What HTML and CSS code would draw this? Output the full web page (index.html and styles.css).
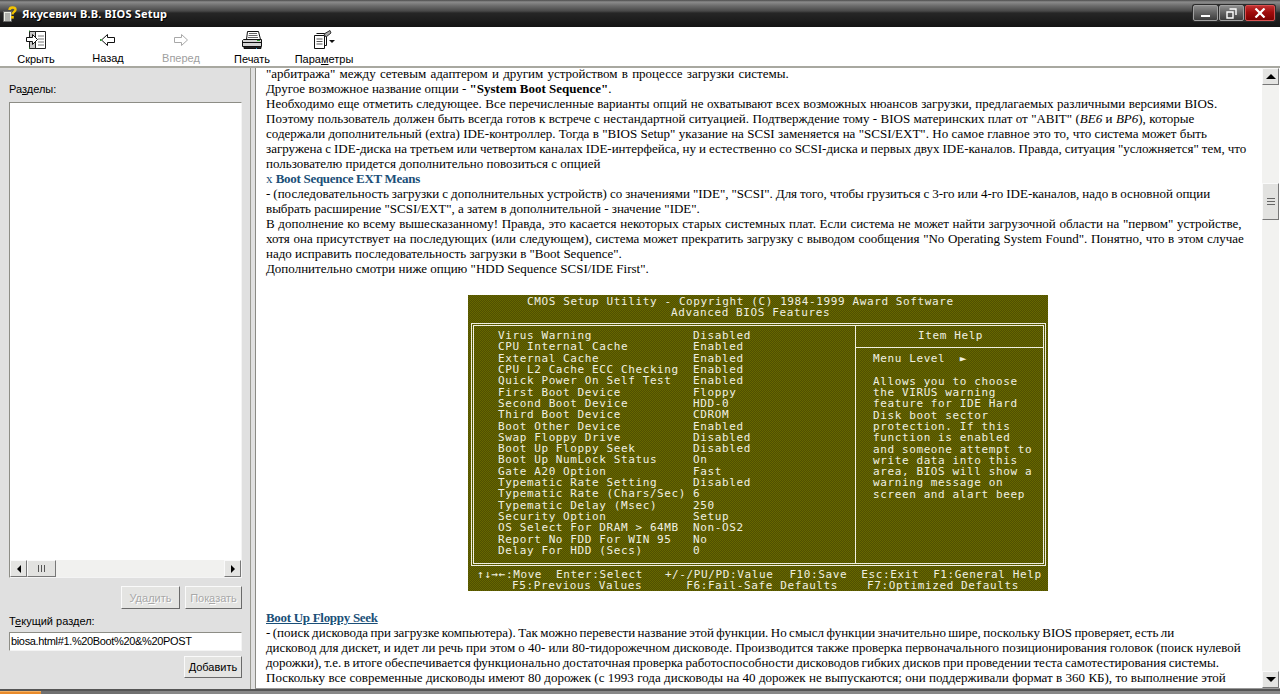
FILE: index.html
```html
<!DOCTYPE html>
<html lang="ru">
<head>
<meta charset="utf-8">
<title>Якусевич В.В. BIOS Setup</title>
<link rel="stylesheet" href="styles.css">
</head>
<body>
<div class="window">
  <header class="titlebar">
    <svg class="app-icon" width="15" height="16" viewBox="0 0 15 16"><path d="M1.500 5.500h8v10h-8z" fill="#eceee6" stroke="#666"/><path d="M3 8h5M3 10h5M3 12h5M3 14h5" stroke="#777"/><path d="M7.500 4C7.500 1 13.500 .5 13.500 3.500c0 2.500-3 2.200-3 5" fill="none" stroke="#f2c200" stroke-width="2.400"/><path d="M9 10h2.800v2.600H9z" fill="#f2c200"/></svg>
    <span class="app-title">Якусевич В.В. BIOS Setup</span>
    <div class="win-buttons">
      <span class="win-btn"><i class="min-glyph"></i></span>
      <span class="win-btn"><svg width="11" height="11" viewBox="0 0 11 11"><path d="M3.500 1h6.500v6M1 4h6v6H1z" fill="none" stroke="#fff" stroke-width="1.400"/></svg></span>
      <span class="win-btn close"><svg width="12" height="10" viewBox="0 0 12 10"><path d="M1.500 0.500l9 9M10.500 0.500l-9 9" stroke="#fff" stroke-width="2.200"/></svg></span>
    </div>
  </header>

  <nav class="toolbar">
    <div class="tool t-hide">
      <svg width="22" height="20" viewBox="0 0 22 20"><path d="M4.500 1.500h16v17h-16z" fill="#fff" stroke="#222"/><path d="M4.500 1.500h6v17h-6z" fill="#c8c8c8" stroke="#222"/><path d="M13 6h6M13 9h6M13 12h6M13 15h6" stroke="#777"/><path d="M1.500 7.500h6V4.500l5 5-5 5v-3h-6z" fill="#fff" stroke="#111"/><path d="M4 1h1M4 18h1" stroke="#2a9a2a"/></svg>
      <span>Скрыть</span>
    </div>
    <div class="tool t-back">
      <svg width="16" height="14" viewBox="0 0 16 14"><path d="M1.500 7L7.500 1.500v3h7v5h-7v3z" fill="#fff" stroke="#111"/><path d="M0 7h1.500" stroke="#2a9a2a" stroke-width="2"/></svg>
      <span>Назад</span>
    </div>
    <div class="tool t-forward disabled">
      <svg width="16" height="14" viewBox="0 0 16 14"><path d="M14.500 7L8.500 1.500v3h-7v5h7v3z" fill="#fff" stroke="#a8a8a8"/></svg>
      <span>Вперед</span>
    </div>
    <div class="tool t-print">
      <svg width="21" height="20" viewBox="0 0 21 20"><path d="M5.500 1.500h11l2 8h-14z" fill="#fff" stroke="#111"/><path d="M7 3.500h8M6.500 5.500h9M6 7.500h10" stroke="#666"/><path d="M1.500 9.500h18v7h-19v-6z" fill="#d4d4d4" stroke="#111"/><path d="M1 12.500h18.500" stroke="#111"/><path d="M2 16.500h17v2H2z" fill="#222" stroke="#111"/><path d="M15 10.500h3" stroke="#2a9a2a"/><path d="M14 18.500h1" stroke="#29a8d8"/></svg>
      <span>Печать</span>
    </div>
    <div class="tool t-options">
      <svg width="22" height="20" viewBox="0 0 22 20"><path d="M1.500 5.500h10v13h-10z" fill="#fff" stroke="#111"/><path d="M3.500 3.500h10v12h-2M5.500 1.500" fill="none" stroke="#111"/><path d="M3.500 9h6M3.500 11.500h6M3.500 14h6" stroke="#555"/><path d="M11 4l6-3.500 1 2.500-5 4z" fill="#aaa" stroke="#333"/><path d="M16 10h6l-3 3z" fill="#111"/></svg>
      <span>Пара<u>м</u>етры</span>
    </div>
  </nav>

  <div class="workspace">
    <aside class="sidebar">
      <label class="side-label">Ра<u>з</u>делы:</label>
      <div class="listbox">
        <div class="listbox-body"></div>
        <div class="hscroll">
          <span class="sb-btn"><i class="arrow left"></i></span>
          <span class="hthumb"><i class="grip-v"></i></span>
          <span class="htrack"></span>
          <span class="sb-btn"><i class="arrow right"></i></span>
        </div>
      </div>
      <div class="btn-row">
        <span class="btn btn-off">Уда<u>л</u>ить</span>
        <span class="btn btn-off btn-show">Пок<u>а</u>зать</span>
      </div>
      <label class="side-label current">Т<u>е</u>кущий раздел:</label>
      <div class="textbox">biosa.html#1.%20Boot%20&amp;%20POST</div>
      <div class="btn-row add-row"><span class="btn btn-add"><u>Д</u>обавить</span></div>
    </aside>

    <div class="splitter"></div>

    <main class="doc-frame">
      <article class="doc">
        <p><span class="ws-p10">"арбитража" между сетевым адаптером и другим устройством в процессе загрузки системы.</span><br>
        Другое возможное название опции - <b>"System Boot Sequence"</b>.<br>
        <span class="ws-p2">Необходимо еще отметить следующее. Все перечисленные варианты опций не охватывают всех возможных нюансов загрузки, предлагаемых различными версиями BIOS.</span><br>
        <span class="ws-p1">Поэтому пользователь должен быть всегда готов к встрече с нестандартной ситуацией. Подтверждение тому - BIOS материнских плат от "ABIT" (<i>ВЕ6</i> и <i>ВР6</i>), которые</span><br>
        <span class="ws-p1">содержали дополнительный (extra) IDE-контроллер. Тогда в "BIOS Setup" указание на SCSI заменяется на "SCSI/EXT". Но самое главное это то, что система может быть</span><br>
        <span class="ws-n2">загружена с IDE-диска на третьем или четвертом каналах IDE-интерфейса, ну и естественно со SCSI-диска и первых двух IDE-каналов. Правда, ситуация "усложняется" тем, что</span><br>
        пользователю придется дополнительно повозиться с опцией<br>
        <span class="term">x <b>Boot Sequence EXT Means</b></span><br>
        <span class="ws-n2">- (последовательность загрузки с дополнительных устройств) со значениями "IDE", "SCSI". Для того, чтобы грузиться с 3-го или 4-го IDE-каналов, надо в основной опции</span><br>
        выбрать расширение "SCSI/EXT", а затем в дополнительной - значение "IDE".<br>
        <span class="ws-p4">В дополнение ко всему вышесказанному! Правда, это касается некоторых старых системных плат. Если система не может найти загрузочной области на "первом" устройстве,</span><br>
        <span class="ws-p4">хотя она присутствует на последующих (или следующем), система может прекратить загрузку с выводом сообщения "No Operating System Found". Понятно, что в этом случае</span><br>
        надо исправить последовательность загрузки в "Boot Sequence".<br>
        Дополнительно смотри ниже опцию "HDD Sequence SCSI/IDE First".</p>

        <figure class="bios">
          <div class="bios-head"><div class="head-1">CMOS Setup Utility - Copyright (C) 1984-1999 Award Software</div><div class="head-2">Advanced BIOS Features</div></div>
          <div class="bios-frame">
            <div class="bios-settings">
              <div class="bios-names">Virus Warning<br>CPU Internal Cache<br>External Cache<br>CPU L2 Cache ECC Checking<br>Quick Power On Self Test<br>First Boot Device<br>Second Boot Device<br>Third Boot Device<br>Boot Other Device<br>Swap Floppy Drive<br>Boot Up Floppy Seek<br>Boot Up NumLock Status<br>Gate A20 Option<br>Typematic Rate Setting<br>Typematic Rate (Chars/Sec)<br>Typematic Delay (Msec)<br>Security Option<br>OS Select For DRAM &gt; 64MB<br>Report No FDD For WIN 95<br>Delay For HDD (Secs)</div>
              <div class="bios-values">Disabled<br>Enabled<br>Enabled<br>Enabled<br>Enabled<br>Floppy<br>HDD-0<br>CDROM<br>Enabled<br>Disabled<br>Disabled<br>On<br>Fast<br>Disabled<br>6<br>250<br>Setup<br>Non-OS2<br>No<br>0</div>
            </div>
            <div class="bios-help">
              <div class="help-title">Item Help</div>
              <div class="help-body">Menu Level &nbsp;►<br><br>Allows you to choose<br>the VIRUS warning<br>feature for IDE Hard<br>Disk boot sector<br>protection. If this<br>function is enabled<br>and someone attempt to<br>write data into this<br>area, BIOS will show a<br>warning message on<br>screen and alart beep</div>
            </div>
          </div>
          <div class="bios-foot">
            <div class="foot-row r1"><span>↑↓→←:Move</span><span>Enter:Select</span><span>+/-/PU/PD:Value</span><span>F10:Save</span><span>Esc:Exit</span><span>F1:General Help</span></div>
            <div class="foot-row r2"><span>F5:Previous Values</span><span>F6:Fail-Safe Defaults</span><span>F7:Optimized Defaults</span></div>
          </div>
        </figure>

        <p><a class="section-link">Boot Up Floppy Seek</a><br>
        <span class="ws-n8">- (поиск дисковода при загрузке компьютера). Так можно перевести название этой функции. Но смысл функции значительно шире, поскольку BIOS проверяет, есть ли</span><br>
        <span class="ws-n1">дисковод для дискет, и идет ли речь при этом о 40- или 80-тидорожечном дисководе. Производится также проверка первоначального позиционирования головок (поиск нулевой</span><br>
        <span class="ws-n7">дорожки), т.е. в итоге обеспечивается функционально достаточная проверка работоспособности дисководов гибких дисков при проведении теста самотестирования системы.</span><br>
        <span class="ws-p1">Поскольку все современные дисководы имеют 80 дорожек (с 1993 года дисководы на 40 дорожек не выпускаются; они поддерживали формат в 360 КБ), то выполнение этой</span></p>
      </article>
      <div class="vscroll">
        <span class="sb-btn"><i class="arrow up"></i></span>
        <span class="vtrack vtrack-top"></span>
        <span class="vthumb"><i class="grip-h"></i></span>
        <span class="vtrack vtrack-bottom"></span>
        <span class="sb-btn"><i class="arrow down"></i></span>
      </div>
    </main>
  </div>

  <footer class="taskbar"><span class="start"></span><span class="task"></span></footer>
</div>
</body>
</html>
```
FILE: styles.css
```css
* { box-sizing: border-box; }
html, body { margin: 0; height: 100%; overflow: hidden; }
body { font-family: "Liberation Sans", Arial, sans-serif; font-size: 11px; color: #000; }
.window { width: 1280px; height: 694px; display: flex; flex-direction: column; background: #e0e0e0; }

/* title bar */
.titlebar { height: 27px; flex: none; display: flex; align-items: center; padding: 0 4px 0 2px;
  background: linear-gradient(#4a4a4a 0, #8c8c8c 2px, #6a6a6a 6px, #484848 11px, #262626 13px, #141414 27px); }
.app-icon { margin: 0 5px 0 0; }
.app-title { font-family: "Noto Sans", sans-serif; font-weight: bold; font-size: 11px; letter-spacing: 0.2px; color: #fff; text-shadow: 1px 1px 0 #000; }
.win-buttons { margin-left: auto; display: flex; gap: 1px; padding: 1px; border-radius: 3px; background: #2c2c2c; margin-top: -1px; }
.win-btn { width: 25px; height: 16px; display: flex; align-items: center; justify-content: center; border-radius: 2px;
  background: linear-gradient(#8c8c8c, #666 45%, #3c3c3c); border: 1px solid #a0a0a0; }
.win-btn.close { width: 30px; background: linear-gradient(#c03030, #a00c0c 45%, #7d0000); border-color: #d85050; }
.min-glyph { display: block; width: 9px; height: 2px; background: #fff; margin-top: 6px; }

/* toolbar */
.toolbar { height: 41px; flex: none; display: flex; background: #fff; border-bottom: 2px solid #a8a8a0; }
.tool { display: flex; flex-direction: column; align-items: center; font-size: 11px; line-height: 13px; }
.tool svg { display: block; }
.tool span { margin-top: 3px; }
.tool.disabled { color: #a0a0a0; }
.t-hide { width: 36px; margin-left: 18px; padding-top: 3px; }
.t-back { width: 34px; margin-left: 37px; padding-top: 6px; }
.t-back span, .t-forward span { margin-top: 5px; }
.t-forward { width: 38px; margin-left: 37px; padding-top: 6px; }
.t-print { width: 36px; margin-left: 34px; padding-top: 3px; }
.t-options { width: 60px; margin-left: 24px; padding-top: 3px; }

/* workspace */
.workspace { flex: 1; min-height: 0; display: flex; }
.sidebar { width: 250px; flex: none; display: flex; flex-direction: column; padding: 15px 8px 0 9px; background: #e0e0e0; }
.side-label { display: block; line-height: 13px; }
.listbox { margin-top: 6px; height: 476px; border: 1px solid; border-color: #8d8d86 #f4f4f4 #f4f4f4 #8d8d86; background: #fff; display: flex; flex-direction: column; }
.listbox-body { flex: 1; }
.hscroll { height: 17px; flex: none; display: flex; background: #f1f1ef; }
.sb-btn { width: 17px; height: 17px; flex: none; display: flex; align-items: center; justify-content: center; background: #e4e4e2; border: 1px solid; border-color: #fafafa #777 #777 #fafafa; }
.arrow { display: block; width: 0; height: 0; border-style: solid; }
.arrow.left { border-width: 4px 4px 4px 0; border-color: transparent #000 transparent transparent; }
.arrow.right { border-width: 4px 0 4px 4px; border-color: transparent transparent transparent #000; }
.arrow.up { border-width: 0 5px 5px; border-color: transparent transparent #000; }
.arrow.down { border-width: 5px 5px 0; border-color: #000 transparent transparent; }
.hthumb { width: 29px; flex: none; display: flex; align-items: center; justify-content: center; background: #e2e2e0; border: 1px solid; border-color: #fafafa #777 #777 #fafafa; }
.grip-v { display: block; width: 7px; height: 7px; background: repeating-linear-gradient(90deg, #555 0 1px, transparent 1px 3px); }
.htrack { flex: 1; }
.btn-row { display: flex; justify-content: flex-end; gap: 5px; margin-top: 8px; }
.btn { height: 23px; display: flex; align-items: center; justify-content: center; background: #e4e4e2; border: 1px solid; border-color: #fafafa #6a6a6a #6a6a6a #fafafa; }
.btn-off { width: 59px; color: #a8a8a8; text-shadow: 1px 1px 0 #fff; }
.btn-show { width: 57px; }
.btn-add { width: 58px; height: 22px; }
.side-label.current { margin-top: 6px; }
.textbox { margin-top: 4px; height: 19px; line-height: 17px; padding-left: 1px; letter-spacing: -0.35px; background: #fff; border: 1px solid; border-color: #8d8d86 #f4f4f4 #f4f4f4 #8d8d86; }
.add-row { margin-top: 5px; }

.splitter { width: 5px; flex: none; background: #e0e0e0; border-left: 1px solid #9a9a92; }

/* document */
.doc-frame { flex: 1; min-width: 0; display: flex; background: #fff; border-left: 1px solid #8a8a84; border-bottom: 1px solid #999; }
.doc { flex: 1; min-width: 0; overflow: hidden; padding: 0 0 0 10px; font-family: "Liberation Serif", "Times New Roman", serif; font-size: 13px; line-height: 15px; white-space: nowrap; }
.doc p { margin: 0; }
.doc p:first-child { margin-top: -2px; }
.term b, .section-link { color: #1a4f78; font-weight: bold; letter-spacing: -0.3px; }
.term { color: #1a4f78; }
.section-link { text-decoration: underline; }
.ws-p10 { word-spacing: 1px; }
.ws-p4 { word-spacing: 0.4px; }
.ws-p2 { word-spacing: 0.2px; }
.ws-p1 { word-spacing: 0.12px; }
.ws-n1 { word-spacing: -0.13px; }
.ws-n2 { word-spacing: -0.25px; }
.ws-n7 { word-spacing: -0.7px; }
.ws-n8 { word-spacing: -0.8px; }

/* bios picture */
.bios { width: 580px; height: 296px; margin: 19px 0 19px 202px; padding: 0 2px 0 3px; display: flex; flex-direction: column; font-family: "DejaVu Sans Mono", monospace; font-size: 11px; letter-spacing: 0.61px; line-height: 11.32px; color: #f0f0e0;
  background-color: #5c5c00; background-image: conic-gradient(#666600 25%, #505000 0 50%, #666600 0 75%, #505000 0); background-size: 2px 2px; }
.bios-head { height: 28px; flex: none; padding-top: 1px; }
.head-1 { padding-left: 56px; }
.head-2 { padding-left: 200px; }
.bios-frame { height: 243px; display: flex; border: 3px double #f0f0e0; flex: none; }
.bios-settings { width: 382px; display: flex; padding: 4px 0 0 24px; border-right: 1px solid #f0f0e0; }
.bios-names { width: 195px; }
.bios-help { flex: 1; display: flex; flex-direction: column; }
.help-title { height: 22px; padding: 4px 0 0 62px; border-bottom: 1px solid #f0f0e0; }
.help-body { padding: 5px 0 0 17px; }
.bios-foot { padding-top: 3px; }
.foot-row { display: flex; height: 10.5px; }
.r1 { padding-left: 6px; }
.r1 span:nth-child(2) { margin-left: 14px; }
.r1 span:nth-child(3) { margin-left: 22px; }
.r1 span:nth-child(4) { margin-left: 16px; }
.r1 span:nth-child(5) { margin-left: 14px; }
.r1 span:nth-child(6) { margin-left: 14px; }
.r2 { padding-left: 41px; }
.r2 span:nth-child(2) { margin-left: 44px; }
.r2 span:nth-child(3) { margin-left: 29px; }

/* document scrollbar */
.vscroll { width: 17px; flex: none; margin-right: 1px; display: flex; flex-direction: column; background: #f2f2f0; }
.vtrack-top { height: 98px; flex: none; }
.vthumb { height: 37px; flex: none; display: flex; align-items: center; justify-content: center; background: #e2e2e0; border: 1px solid; border-color: #fafafa #777 #777 #fafafa; }
.grip-h { display: block; width: 8px; height: 7px; background: repeating-linear-gradient(#666 0 1px, transparent 1px 3px); }
.vtrack-bottom { flex: 1; }

/* taskbar sliver */
.taskbar { height: 5px; flex: none; display: flex; background: #888; border-top: 2px solid #555; }
.start { width: 41px; background: #e88a2a; border-top: 1px solid #f5b060; }
.task { width: 109px; background: #707070; }
```
